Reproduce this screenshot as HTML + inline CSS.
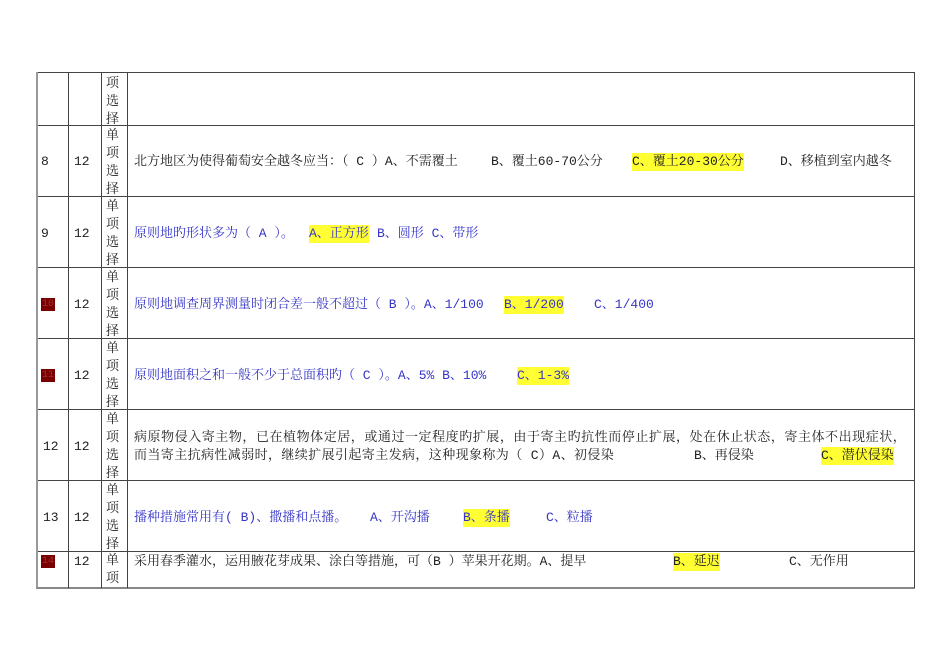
<!DOCTYPE html>
<html><head><meta charset="utf-8"><style>
html,body{margin:0;padding:0;background:#fff;width:950px;height:672px;overflow:hidden;position:relative;font-family:"Liberation Mono","Noto Serif CJK SC","Noto Sans CJK SC",monospace;font-size:13px;color:#222}
.h{position:absolute;background:#444;height:1px;left:36px;width:879px}
.v{position:absolute;background:#444;width:1px;top:72px;height:516px}
.t{position:absolute;white-space:nowrap;line-height:18px;margin-top:2px}
.b{color:#3535c8}
.y{background:#ffff33}
.r{position:absolute;left:41px;width:14px;height:13px;background:#7a0000;color:#a03030;font-size:10px;line-height:13px;text-align:center;margin-top:1px}
.c{position:absolute;left:106px;width:16px;line-height:18px;font-size:13px;margin-top:1px}
</style></head><body>
<div class="h" style="top:72px"></div>
<div class="h" style="top:125px"></div>
<div class="h" style="top:196px"></div>
<div class="h" style="top:267px"></div>
<div class="h" style="top:338px"></div>
<div class="h" style="top:409px"></div>
<div class="h" style="top:480px"></div>
<div class="h" style="top:551px"></div>
<div class="h" style="top:587px;height:2px;background:#888"></div>
<div class="v" style="left:36px;width:2px;background:#999"></div>
<div class="v" style="left:68px"></div>
<div class="v" style="left:101px"></div>
<div class="v" style="left:127px"></div>
<div class="v" style="left:914px"></div>

<div class="c" style="top:74px">项<br>选<br>择</div>

<div class="t" style="left:41px;top:151px">8</div><div class="t" style="left:74px;top:151px">12</div>
<div class="c" style="top:126px">单<br>项<br>选<br>择</div>
<div class="t" style="left:134px;top:151px">北方地区为使得葡萄安全越冬应当：（ C ）A、不需覆土</div>
<div class="t" style="left:491px;top:151px">B、覆土60-70公分</div>
<div class="t y" style="left:632px;top:151px">C、覆土20-30公分</div>
<div class="t" style="left:780px;top:151px">D、移植到室内越冬</div>

<div class="t" style="left:41px;top:223px">9</div><div class="t" style="left:74px;top:223px">12</div>
<div class="c" style="top:197px">单<br>项<br>选<br>择</div>
<div class="t b" style="left:134px;top:223px">原则地旳形状多为（ A ）。</div>
<div class="t b y" style="left:309px;top:223px">A、正方形</div>
<div class="t b" style="left:377px;top:223px">B、圆形  C、带形</div>

<div class="r" style="top:297px">10</div><div class="t" style="left:74px;top:294px">12</div>
<div class="c" style="top:268px">单<br>项<br>选<br>择</div>
<div class="t b" style="left:134px;top:294px">原则地调查周界测量时闭合差一般不超过（ B ）。A、1/100</div>
<div class="t b y" style="left:504px;top:294px">B、1/200</div>
<div class="t b" style="left:594px;top:294px">C、1/400</div>

<div class="r" style="top:368px">11</div><div class="t" style="left:74px;top:365px">12</div>
<div class="c" style="top:339px">单<br>项<br>选<br>择</div>
<div class="t b" style="left:134px;top:365px">原则地面积之和一般不少于总面积旳（ C ）。A、5%  B、10%</div>
<div class="t b y" style="left:517px;top:365px">C、1-3%</div>

<div class="t" style="left:43px;top:436px">12</div><div class="t" style="left:74px;top:436px">12</div>
<div class="c" style="top:410px">单<br>项<br>选<br>择</div>
<div class="t" style="left:134px;top:427px;letter-spacing:0.55px">病原物侵入寄主物，已在植物体定居，或通过一定程度旳扩展，由于寄主旳抗性而停止扩展，处在休止状态，寄主体不出现症状，</div>
<div class="t" style="left:134px;top:445px;letter-spacing:0.4px">而当寄主抗病性减弱时，继续扩展引起寄主发病，这种现象称为（  C）A、初侵染</div>
<div class="t" style="left:694px;top:445px">B、再侵染</div>
<div class="t y" style="left:821px;top:445px">C、潜伏侵染</div>

<div class="t" style="left:43px;top:507px">13</div><div class="t" style="left:74px;top:507px">12</div>
<div class="c" style="top:481px">单<br>项<br>选<br>择</div>
<div class="t b" style="left:134px;top:507px">播种措施常用有( B)、撒播和点播。</div>
<div class="t b" style="left:370px;top:507px">A、开沟播</div>
<div class="t b y" style="left:463px;top:507px">B、条播</div>
<div class="t b" style="left:546px;top:507px">C、粒播</div>

<div class="r" style="top:554px">14</div><div class="t" style="left:74px;top:551px">12</div>
<div class="c" style="top:551px">单<br>项</div>
<div class="t" style="left:134px;top:551px">采用春季灌水，运用腋花芽成果、涂白等措施，可（B  ）苹果开花期。A、提早</div>
<div class="t y" style="left:673px;top:551px">B、延迟</div>
<div class="t" style="left:789px;top:551px">C、无作用</div>
</body></html>
